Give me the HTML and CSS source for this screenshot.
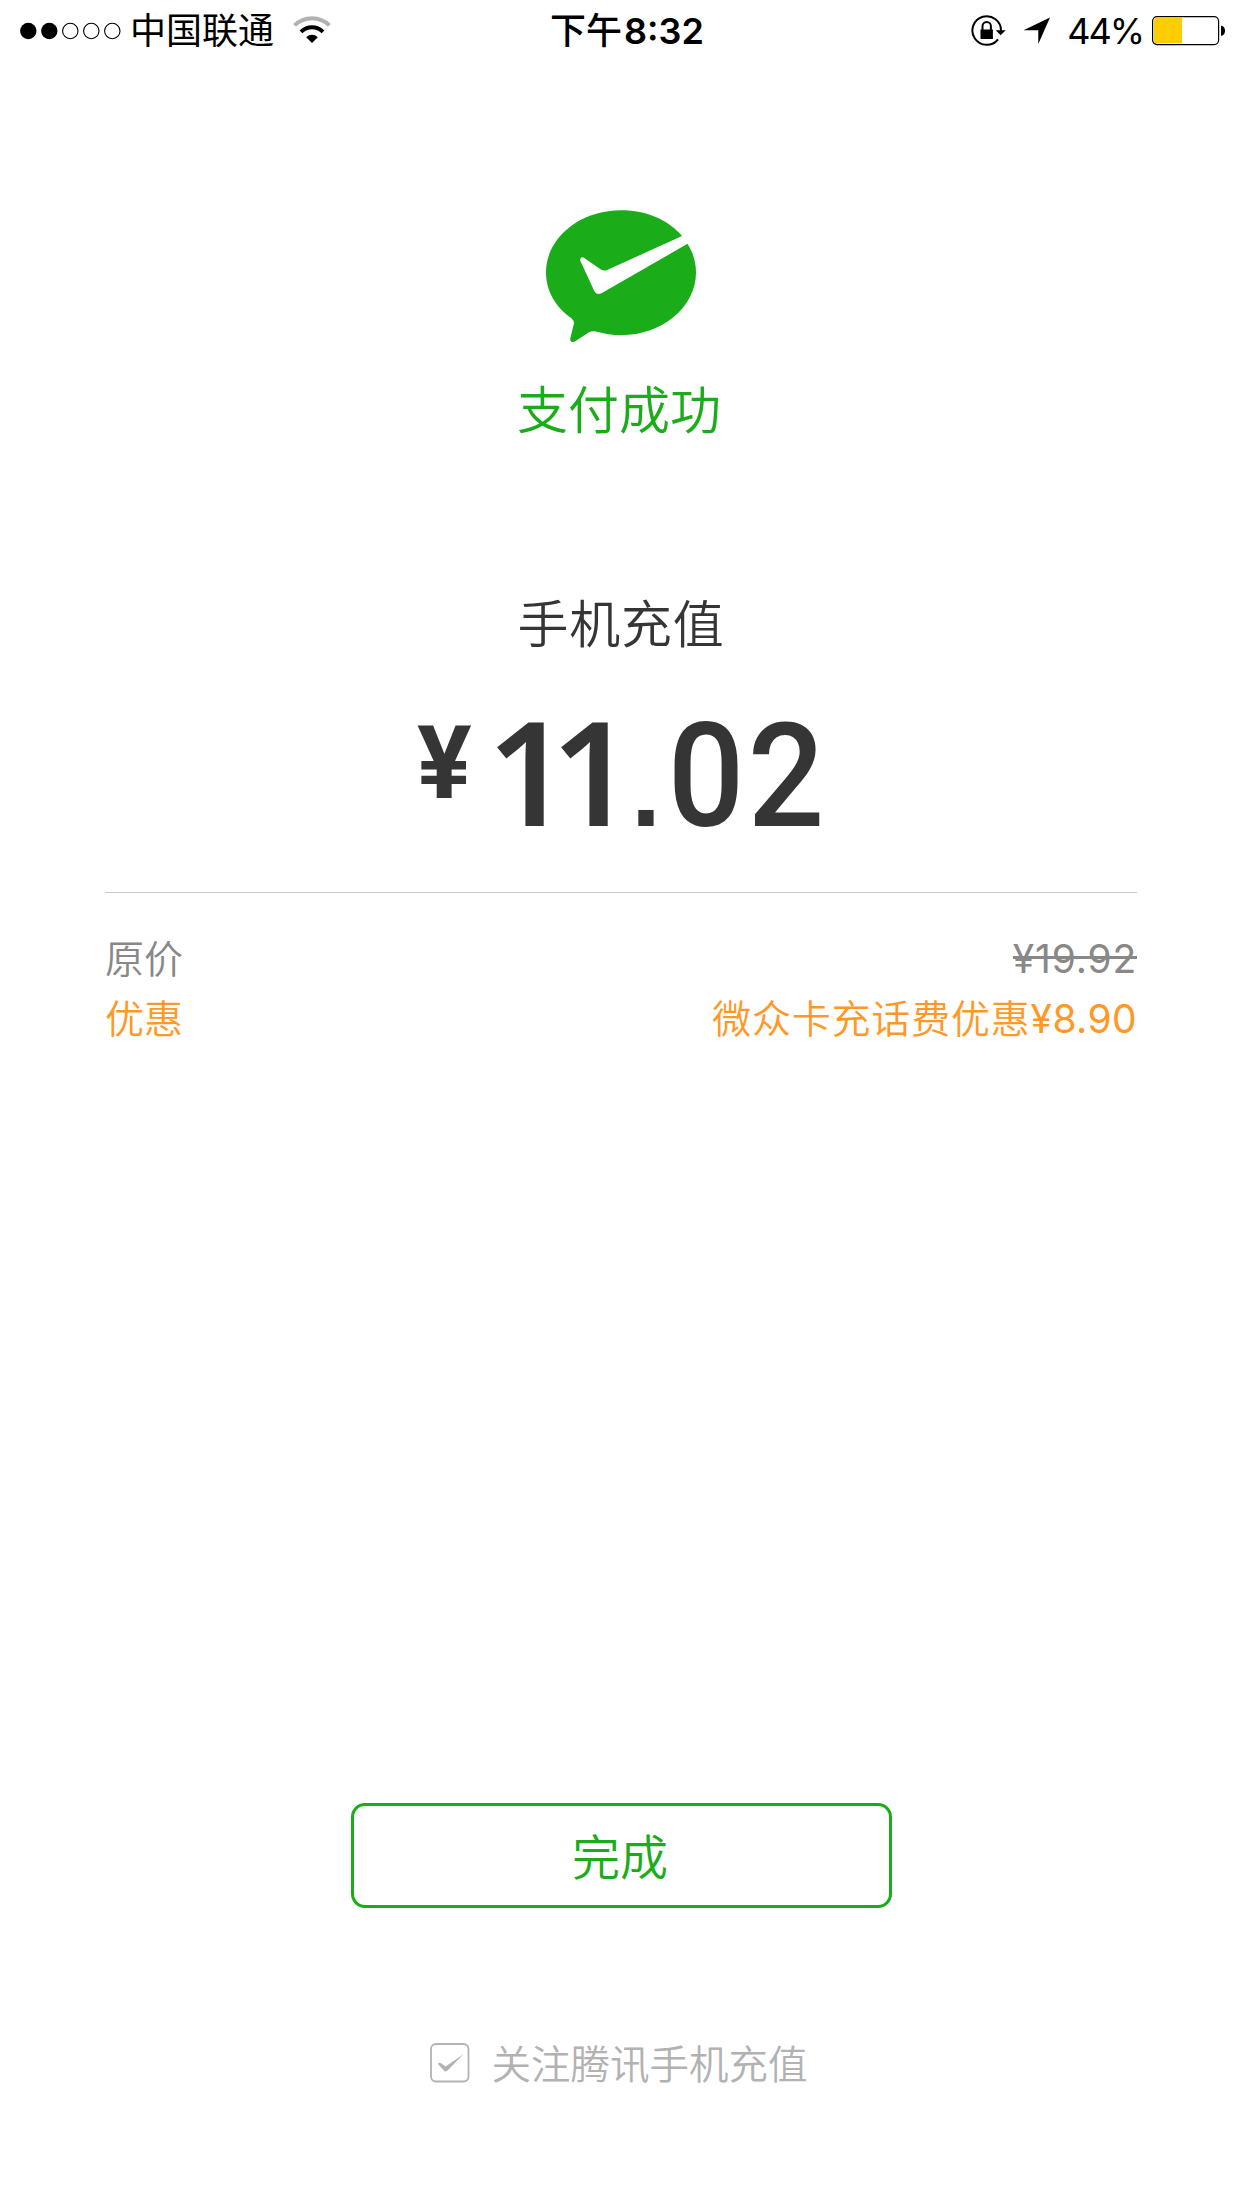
FILE: index.html
```html
<!DOCTYPE html>
<html lang="zh-CN">
<head>
<meta charset="utf-8">
<title>支付成功</title>
<link rel="stylesheet" href="styles.css">
</head>
<body>
<div class="screen">
  <header class="status">
    <div class="status-left">
      <svg class="signal" width="101" height="18" viewBox="0 0 101 18">
        <circle cx="8.3" cy="9" r="8.2"/><circle cx="29.3" cy="9" r="8.2"/>
        <g fill="none" stroke="#000" stroke-width="1.1"><circle cx="50.3" cy="9" r="7.7"/><circle cx="71.3" cy="9" r="7.7"/><circle cx="92.3" cy="9" r="7.7"/></g>
      </svg>
      <span class="carrier">中国联通</span>
      <svg class="wifi" width="38" height="28" viewBox="0 0 38 28">
        <g fill="none" stroke-width="4"><path d="M1.6 9.4a24.7 24.7 0 0 1 34.8 0" stroke="#b2b2b2"/><path d="M8 15.8a15.6 15.6 0 0 1 22 0" stroke="#000"/></g>
        <path d="M13.2 21.2a8.2 8.2 0 0 1 11.6 0L19 27z"/>
      </svg>
    </div>
    <div class="time"><span class="ampm">下午</span>8:32</div>
    <div class="status-right">
      <svg class="lock" width="36" height="32" viewBox="0 0 36 32">
        <path d="M30 16A14.300 14.300 0 1 0 27 24.3" fill="none" stroke="#000" stroke-width="2"/>
        <path d="M24.700 15.3h10l-5 5z"/>
        <rect x="9.500" y="14.500" width="12.4" height="9.500"/><path d="M11.500 15.5v-4.200a4.200 4.200 0 0 1 8.400 0v4.200" fill="none" stroke="#000" stroke-width="2"/>
      </svg>
      <svg class="arrow" width="28" height="28" viewBox="0 0 28 28"><path d="M27 .5L15.300 27V13.300H.5z"/></svg>
      <span class="percent">44%</span>
      <svg class="battery" width="74" height="30" viewBox="0 0 74 30">
        <rect x=".6" y=".6" width="66" height="28" rx="4.500" fill="#fff" stroke="#000" stroke-width="1.200"/>
        <path d="M5 2h25v25.200H5a3 3 0 0 1-3-3V5a3 3 0 0 1 3-3z" fill="#ffcc00"/>
        <path d="M69 9.800c5.300 0 5.300 10 0 10z"/>
      </svg>
    </div>
  </header>

  <main class="result">
    <svg class="logo" width="150" height="134" viewBox="0 0 150 134">
      <path fill="#1aad19" d="M75 .3C101 .3 123 10.500 136 26L60.500 60.300Q57.500 61 54.500 59.300L37.500 47.600Q34 46.500 34.200 50.500L48.500 81.500Q51 85.500 55.500 83.300L141.500 33.800C147 42.500 150 52 150 62.500C150 97 116.500 125.200 75 125.200C66 125.200 59 124 52 122Q47 120.500 43 122.300L30 130.800C26.500 133.500 23.200 131.500 24.500 127.500L27.800 114Q28.300 111 25.500 108.300C10 97.500 0 81.500 0 62.500C0 28 33.500.3 75 .3z"/>
    </svg>
    <p class="state">支付成功</p>
    <h1 class="title">手机充值</h1>
    <div class="amount"><span class="currency">¥</span><span class="ones">11</span><span class="dot">.</span><span class="cents">02</span></div>
    <dl class="details">
      <div class="row"><dt>原价</dt><dd><s>¥19.92</s></dd></div>
      <div class="row promo"><dt>优惠</dt><dd>微众卡充话费优惠<span class="number">¥8.90</span></dd></div>
    </dl>
  </main>

  <footer class="foot">
    <button class="done" type="button">完成</button>
    <label class="follow">
      <svg width="40" height="40" viewBox="0 0 40 40"><rect x="1" y="1" width="37.500" height="37.500" rx="5" fill="none" stroke="#b2b2b2" stroke-width="1.800"/><path fill="#b2b2b2" d="M8 21q1-2 3-.8l4.500 3.200L33.500 11.200 17.500 27.500q-2 1.800-3.700 0z"/></svg>
      <span>关注腾讯手机充值</span>
    </label>
  </footer>
</div>
</body>
</html>
```
FILE: styles.css
```css
* { box-sizing: border-box; margin: 0; padding: 0; }
body { background: #fff; font-family: Inter, "Noto Sans CJK SC", sans-serif; font-weight: 350; }
svg { display: block; flex: none; }
.screen { width: 1242px; height: 2208px; display: flex; flex-direction: column; overflow: hidden; }

.status { height: 60px; padding: 1px 16px 0 20px; display: grid; grid-template-columns: 530px auto 1fr; align-items: center; font-size: 36px; line-height: 60px; font-weight: 400; color: #000; white-space: nowrap; }
.status-left, .status-right { display: flex; align-items: center; }
.status-right { justify-content: flex-end; }
.signal { margin-top: -1px; }
.carrier { margin-left: 9px; }
.wifi { margin-left: 19px; margin-top: -2px; }
.time { font-weight: 600; }
.ampm { font-weight: 500; margin-right: 2px; }
.lock { margin-top: -1px; }
.arrow { margin-left: 16px; }
.percent { margin-left: 16px; letter-spacing: -2px; }
.battery { margin-left: 9px; margin-top: -1px; }

.result { display: flex; flex-direction: column; align-items: center; padding-top: 150px; }
.state { margin: 37px 4px 0 0; font-size: 51px; line-height: 60px; color: #1aad19; }
.title { margin-top: 154px; font-size: 51px; line-height: 60px; font-weight: 350; letter-spacing: .7px; color: #353535; }
.amount { display: flex; width: 408px; height: 237px; padding-top: 49px; font: 500 145px/145px Roboto, sans-serif; color: #353535; }
.amount > span { flex: none; }
.currency { width: 70px; font-size: 102px; line-height: 118px; font-weight: 700; }
.ones { width: 130px; font-family: "Noto Sans", sans-serif; font-weight: 600; line-height: 131px; letter-spacing: -19px; }
.dot { width: 26px; margin-left: 14px; font-family: "Liberation Sans", sans-serif; font-weight: 700; font-size: 108px; line-height: 170px; }
.cents { letter-spacing: 3.500px; transform: scaleX(.93); transform-origin: 154px 0; }
.details { width: 1032px; border-top: 1px solid #c8c8c8; padding-top: 36px; font-size: 39px; line-height: 60px; color: #888; }
.row { display: flex; justify-content: space-between; }
.row dd { letter-spacing: .8px; }
.row s, .number { font-weight: 400; }
.row s { display: block; text-decoration: none; background: linear-gradient(#888, #888) 0 27px / 100% 3px no-repeat; }
.number { letter-spacing: .4px; }
.promo { color: #ff9827; }

.foot { margin-top: auto; display: flex; flex-direction: column; align-items: center; padding-bottom: 113px; }
.done { width: 541px; height: 105px; padding: 0 2px 4px 0; border: 3px solid #1aad19; border-radius: 14px; background: none; color: #1aad19; font: 350 48px/60px "Noto Sans CJK SC", sans-serif; }
.follow { display: flex; align-items: center; margin: 127px 5px 0 0; font-size: 39.500px; line-height: 60px; color: #b2b2b2; gap: 22px; }
.follow svg { margin-top: -4px; }
```
